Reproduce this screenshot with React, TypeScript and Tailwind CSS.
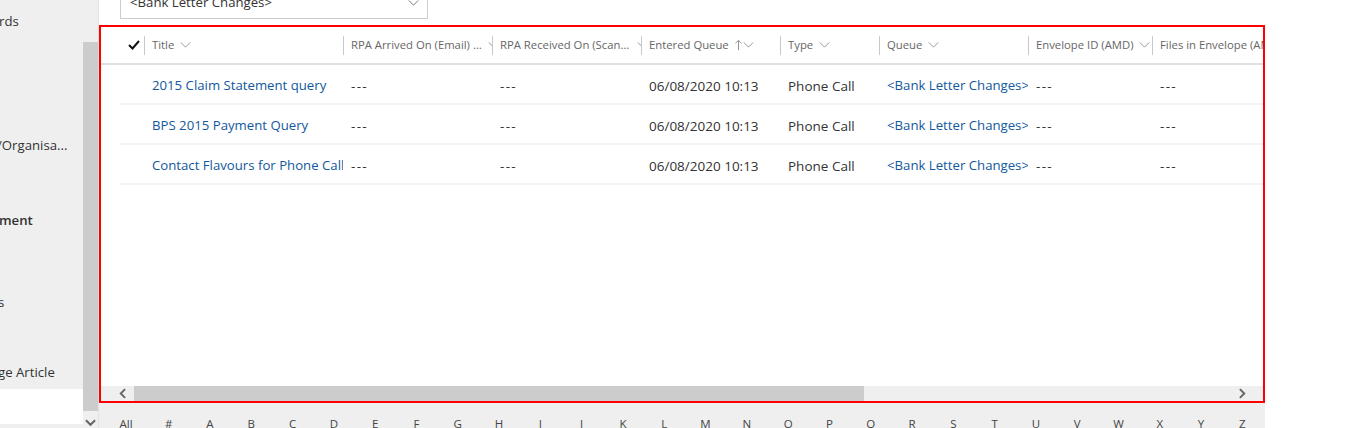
import React from 'react';

interface Column {
  label: string;
  width: string;
  labelWidth?: string;
  sortUp?: boolean;
}

const columns: Column[] = [
  { label: 'Title', width: 'w-[199px]' },
  { label: 'RPA Arrived On (Email) Date', width: 'w-[149px]', labelWidth: 'truncate max-w-[131px]' },
  { label: 'RPA Received On (Scanned) Date', width: 'w-[149px]', labelWidth: 'truncate max-w-[131px]' },
  { label: 'Entered Queue', width: 'w-[139px]', sortUp: true },
  { label: 'Type', width: 'w-[99px]' },
  { label: 'Queue', width: 'w-[149px]' },
  { label: 'Envelope ID (AMD)', width: 'w-[124px]' },
  { label: 'Files in Envelope (AMD)', width: 'w-[150px]' },
];

interface Row {
  title: string;
  entered: string;
  type: string;
  queue: string;
}

const rows: Row[] = [
  { title: '2015 Claim Statement query', entered: '06/08/2020 10:13', type: 'Phone Call', queue: '<Bank Letter Changes>' },
  { title: 'BPS 2015 Payment Query', entered: '06/08/2020 10:13', type: 'Phone Call', queue: '<Bank Letter Changes>' },
  { title: 'Contact Flavours for Phone Call', entered: '06/08/2020 10:13', type: 'Phone Call', queue: '<Bank Letter Changes>' },
];

const letters = ['#', 'A', 'B', 'C', 'D', 'E', 'F', 'G', 'H', 'I', 'J', 'K', 'L', 'M', 'N', 'O', 'P', 'Q', 'R', 'S', 'T', 'U', 'V', 'W', 'X', 'Y', 'Z'];

const font = { fontFamily: '"Segoe UI", "Open Sans", sans-serif' };

const ChevronDown = ({ className }: { className?: string }) => (
  <svg viewBox="0 0 12 7" className={className} fill="none" stroke="currentColor" strokeWidth="1">
    <path d="M0.5 0.5 L6 6 L11.5 0.5" />
  </svg>
);

const Cell = ({ width, children, link }: { width: string; children: React.ReactNode; link?: boolean }) => (
  <div className={`${width} shrink-0 overflow-hidden whitespace-nowrap pl-2 ${link ? 'text-[13.2px] text-[#11589e]' : 'text-[#333333]'}`}>
    {children}
  </div>
);

const Empty = () => <span className="tracking-[1.3px]">---</span>;

const App: React.FC = () => {
  return (
    <div className="flex h-[428px] w-[1365px] overflow-hidden bg-white text-[#333333]" style={font}>
      {/* left nav, scrolled sideways */}
      <div className="flex w-[83px] shrink-0 flex-col overflow-hidden bg-[#efefef] text-[13.2px] leading-[20px]">
        <div className="-ml-[1px] mt-[11px] whitespace-nowrap">rds</div>
        <div className="-ml-[3px] mt-[104px] whitespace-nowrap">/Organisa...</div>
        <div className="-ml-[1px] mt-[55px] whitespace-nowrap font-semibold">ment</div>
        <div className="-ml-[2px] mt-[62px] whitespace-nowrap">s</div>
        <div className="-ml-[2px] mt-[50px] whitespace-nowrap">ge Article</div>
        <div className="mt-[7px] h-[35px] bg-white" />
      </div>
      <div className="flex w-[15px] shrink-0 flex-col items-center bg-[#efefef]">
        <div className="mt-[42px] h-[369px] w-full bg-[#cccccc]" />
        <svg viewBox="0 0 12 8" className="mt-[8px] h-[8px] w-[11px] text-[#666666]" fill="none" stroke="currentColor" strokeWidth="2.2">
          <path d="M1 1 L6 6 L11 1" />
        </svg>
      </div>

      {/* main */}
      <div className="flex flex-1 flex-col border-l border-[#e2e2e2]">
        <div className="h-[25px] pl-[21px]">
          <div className="-mt-[13px] flex h-[32px] w-[308px] items-center justify-between border border-[#cccccc] pl-[9px] pr-[8px] text-[13.2px]">
            <span>&lt;Bank Letter Changes&gt;</span>
            <ChevronDown className="h-[6px] w-[11px] text-[#666666]" />
          </div>
        </div>

        <div className="flex h-[378px] w-[1166px] flex-col overflow-hidden border-2 border-[#ff0000]">
          {/* header */}
          <div className="flex h-[38px] shrink-0 items-center overflow-hidden border-b-2 border-[#e1e1e1] pl-[19px] text-[11.3px] text-[#666666]">
            <div className="flex w-[24px] shrink-0 justify-end pr-[4px]">
              <svg viewBox="0 0 12 10" className="h-[10px] w-[12px] text-[#111111]" fill="none" stroke="currentColor" strokeWidth="2">
                <path d="M1 5 L4.5 8.5 L11 1" />
              </svg>
            </div>
            {columns.map((c) => (
              <div key={c.label} className={`${c.width} flex shrink-0 items-center overflow-hidden whitespace-nowrap`}>
                <span className="h-[19px] w-px shrink-0 bg-[#c8c8c8]" />
                <span className={`ml-[7px] shrink-0 ${c.labelWidth ?? ''}`}>{c.label}</span>
                {c.sortUp && (
                  <svg viewBox="0 0 8 12" className="ml-[6px] h-[12px] w-[7px] shrink-0 text-[#888888]" fill="none" stroke="currentColor" strokeWidth="1">
                    <path d="M4 12 V1 M0.5 4 L4 0.7 L7.5 4" />
                  </svg>
                )}
                <ChevronDown className={`${c.sortUp ? 'ml-[1px]' : 'ml-[6px]'} h-[6px] w-[11px] shrink-0 text-[#888888]`} />
              </div>
            ))}
          </div>

          {/* rows */}
          <div className="flex-1 overflow-hidden pl-[19px] text-[13.5px]">
            {rows.map((r) => (
              <div key={r.title} className="flex h-[40px] items-center border-b-2 border-[#f3f3f3] pt-[4px]">
                <div className="w-[24px] shrink-0" />
                <Cell width="w-[199px]" link>{r.title}</Cell>
                <Cell width="w-[149px]"><Empty /></Cell>
                <Cell width="w-[149px]"><Empty /></Cell>
                <Cell width="w-[139px]">{r.entered}</Cell>
                <Cell width="w-[99px]">{r.type}</Cell>
                <Cell width="w-[149px]" link>{r.queue}</Cell>
                <Cell width="w-[124px]"><Empty /></Cell>
                <Cell width="w-[120px]"><Empty /></Cell>
              </div>
            ))}
          </div>

          {/* horizontal scrollbar */}
          <div className="flex h-[15px] shrink-0 items-center bg-[#efefef]">
            <div className="flex w-[33px] shrink-0 justify-center pl-[9px]">
              <svg viewBox="0 0 8 12" className="h-[11px] w-[7px] text-[#666666]" fill="none" stroke="currentColor" strokeWidth="2.2">
                <path d="M7 1 L2 6 L7 11" />
              </svg>
            </div>
            <div className="h-full w-[730px] bg-[#cccccc]" />
            <div className="flex flex-1 justify-end pr-[17px]">
              <svg viewBox="0 0 8 12" className="h-[11px] w-[7px] text-[#666666]" fill="none" stroke="currentColor" strokeWidth="2.2">
                <path d="M1 1 L6 6 L1 11" />
              </svg>
            </div>
          </div>
        </div>

        {/* alphabet filter */}
        <div className="flex h-[25px] w-[1166px] bg-[#efefef] pl-[5px] pt-[13px] text-[11.5px] leading-[16px] text-[#444444]">
          <span className="w-[44px] shrink-0 text-center">All</span>
          {letters.map((l) => (
            <span key={l} className="w-[41.3px] shrink-0 text-center">{l}</span>
          ))}
        </div>
      </div>
    </div>
  );
};

export default App;
